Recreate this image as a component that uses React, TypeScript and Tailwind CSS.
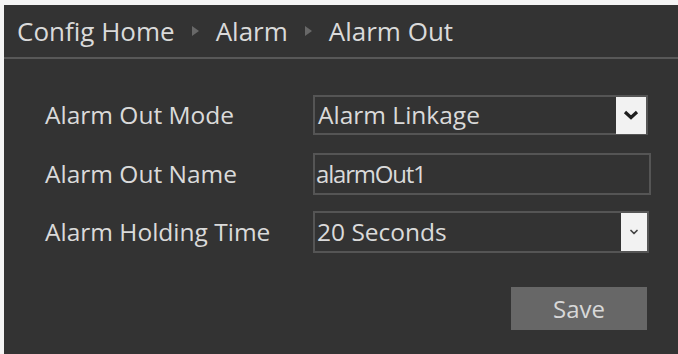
import { ChevronDown } from "lucide-react"

function Arrow() {
  return (
    <svg width="7" height="10" viewBox="0 0 7 10" className="shrink-0">
      <path d="M0 0 L7 5 L0 10 Z" fill="#686868" />
    </svg>
  )
}

export default function App() {
  const font = { fontFamily: '"Open Sans", "Noto Sans", sans-serif' }

  return (
    <div className="w-[678px] h-[354px] bg-[#f4f4f4] pt-[5px] pl-[4px]" style={font}>
      <div className="h-full bg-[#333333] text-[#dadada]">

        {/* Breadcrumb */}
        <div className="h-[54px] flex items-center gap-[17px] pl-[13px] border-b-2 border-[#585858] text-[26px]">
          <span>Config Home</span>
          <Arrow />
          <span>Alarm</span>
          <Arrow />
          <span>Alarm Out</span>
        </div>

        <div className="pl-[41px] pt-[36px] text-[24.5px]">
          <div className="flex items-center h-[40px]">
            <div className="w-[268px]">Alarm Out Mode</div>
            <div className="w-[335px] h-[40px] border-2 border-[#555555] flex items-center justify-between pl-[3px]">
              <span>Alarm Linkage</span>
              <div className="w-[30px] h-[37px] bg-[#f2f2f2] flex items-center justify-center">
                <svg width="16" height="10" viewBox="0 0 16 10">
                  <path d="M2 2 L8 7.5 L14 2" fill="none" stroke="#1e1e1e" strokeWidth="3.2" />
                </svg>
              </div>
            </div>
          </div>

          <div className="flex items-center h-[42px] mt-[18px]">
            <div className="w-[268px]">Alarm Out Name</div>
            <div className="w-[338px] h-[42px] border-2 border-[#555555] flex items-center pl-[1px] text-[24px] tracking-[-1.2px]">
              alarmOut1
            </div>
          </div>

          <div className="flex items-center h-[42px] mt-[16px]">
            <div className="w-[268px]">Alarm Holding Time</div>
            <div className="w-[336px] h-[42px] border-2 border-[#555555] flex items-center justify-between pl-[2px]">
              <span>20 Seconds</span>
              <div className="w-[26px] h-[38px] bg-[#f2f2f2] flex items-center justify-center">
                <ChevronDown size={12} strokeWidth={3.5} className="text-[#444444]" />
              </div>
            </div>
          </div>

          <div className="flex pt-[34px] pl-[466px]">
            <button className="w-[136px] h-[43px] bg-[#676767] text-[#d8d8d8] text-[24px]">
              Save
            </button>
          </div>
        </div>
      </div>
    </div>
  )
}
